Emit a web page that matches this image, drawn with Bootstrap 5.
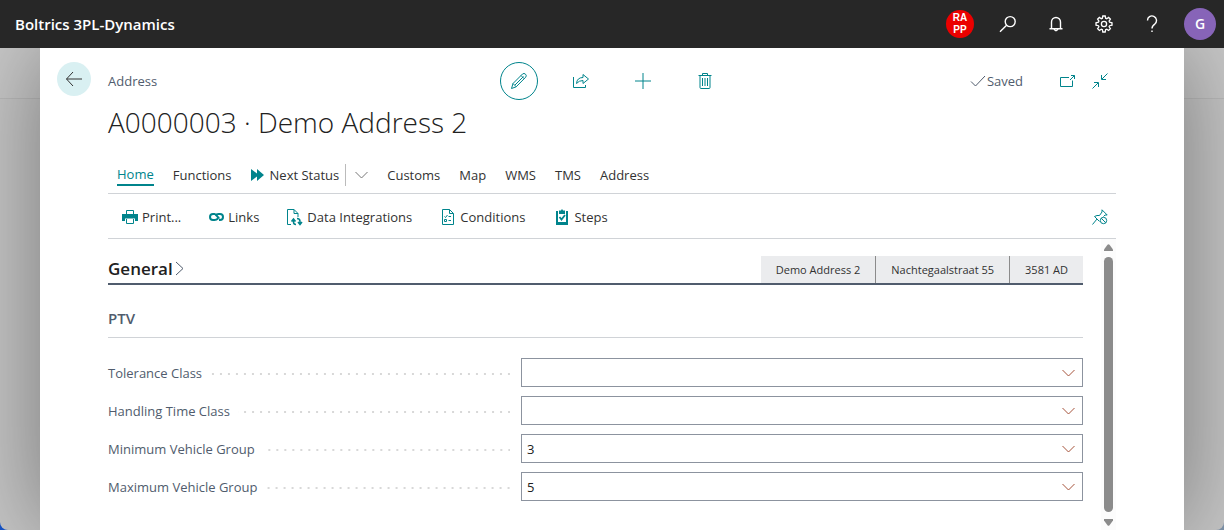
<!DOCTYPE html>
<html lang="en">
<head>
<meta charset="utf-8">
<meta name="viewport" content="width=device-width, initial-scale=1">
<title>Boltrics 3PL-Dynamics</title>
<link href="https://cdn.jsdelivr.net/npm/bootstrap@5.3.0/dist/css/bootstrap.min.css" rel="stylesheet">
<style>
:root { --teal: #00848c; --slate: #505c6d; --ink: #323232; }
body { font-family: "Open Sans", "Noto Sans", sans-serif; font-size: 13px; line-height: 20px; color: var(--ink); background: linear-gradient(90deg, #1450c0 0 50%, #7a8ea4 50%); }
button { color: inherit; }
svg { display: block; fill: none; stroke: currentColor; flex: none; }
.shell { border-radius: 0 0 8px 8px; background: linear-gradient(#c8c8c8 0 98px, #bababa 98px 99px, #c6c6c6 99px); }
.topbar { height: 48px; padding: 0 8px 4px 15px; background: #272727; z-index: 2; }
.brand { font-size: 15px; font-weight: 600; }
.topbar .btn { width: 48px; height: 48px; color: #fff; }
.round { border-radius: 50%; font-weight: 600; color: #fff; }
.company { width: 28px; height: 28px; font: 700 10px/12px "Liberation Sans", sans-serif; background: #eb0000; margin-right: 10px; }
.avatar { width: 32px; height: 32px; background: #8764b8; font-size: 14px; margin-left: 8px; }
.topbar > * { margin-top: 4px; }
.sheet { margin: 0 40px; padding: 14px 68px 0; background: #fff; box-shadow: 0 0 90px rgba(0,0,0,.4); }
.headrow { display: grid; grid-template-columns: 1fr auto 1fr; height: 38px; }
.back { width: 34px; height: 34px; left: -51px; top: 0; background: #d9f0f2; color: #323232; border-radius: 50%; }
.tool { width: 38px; height: 38px; color: var(--teal); }
.tool.edit { border: 1px solid var(--teal); border-radius: 50%; }
.quiet { color: var(--slate); }
.teal { color: var(--teal); }
h1 { font-size: 28px; font-weight: 300; line-height: 40px; margin: 2px 0 0; color: #212121; }
.tabrow { margin-top: 20px; height: 32px; padding: 0 9px 5px; gap: 19px; border-bottom: 1px solid #d0d3d7; }
.tabrow a, .actions a { color: var(--ink); text-decoration: none; }
.tabrow a.active { color: var(--teal); border-bottom: 2px solid var(--teal); }
.split { height: 22px; border-left: 1px solid #bbb; padding-left: 9px; margin-left: 6px; color: #777; }
.actions { height: 45px; padding: 2px 8px 0 14px; border-bottom: 1px solid #d0d3d7; gap: 28px; }
.rail { width: 15px; margin-left: 18px; background: #fcfcfc; color: #8b8b8b; padding: 5px 0 4px; }
.thumb { width: 9px; border-radius: 5px; background: #8b8b8b; margin: 6px 0 7px; }
.grouphead { margin-top: 17px; height: 29px; border-bottom: 2px solid var(--slate); }
h2 { font-size: 17px; line-height: 24px; height: 25px; font-weight: 600; margin: 0; color: #212121; }
h2 svg { margin-left: 2px; }
.facts { background: #ebecee; font-size: 11px; line-height: 27px; }
.facts span { padding: 0 15px; }
.facts span + span { border-left: 1px solid #8b8b8b; }
h3 { font-size: 15px; line-height: 20px; font-weight: 600; color: var(--slate); margin: 23px 0 20px; padding-bottom: 9px; border-bottom: 1px solid #d0d3d7; }
.field { display: grid; grid-template-columns: 413fr 562fr; margin-bottom: 9px; }
.leader { height: 2px; margin: 2px 11px 0 8px; background: linear-gradient(90deg, transparent 6px, #d8d8d8 6px) right / 8px 2px repeat-x; }
.combo { height: 29px; border: 1px solid #8c939f; }
.combo input { font-size: 13px; color: #212121; padding: 0 5px; outline: 0; min-width: 0; }
.combo .btn { color: #a5523a; padding: 0 7px; }
</style>
</head>
<body>
<div class="shell min-vh-100 d-flex flex-column overflow-hidden">
  <header class="topbar d-flex align-items-center text-white position-relative">
    <span class="brand me-auto">Boltrics 3PL-Dynamics</span>
    <button type="button" class="round company border-0 p-0 text-center">RA<br>PP</button>
    <button type="button" class="btn p-0 d-flex align-items-center justify-content-center" aria-label="Search"><svg width="18" height="18" stroke-width="1.4"><circle cx="11.2" cy="6.6" r="5"/><path d="M7.6 10.2 1 16.8"/></svg></button>
    <button type="button" class="btn p-0 d-flex align-items-center justify-content-center" aria-label="Notifications"><svg width="16" height="18" stroke-width="1.4"><path d="M1.5 13.8h13M3.5 13.5V7a4.5 4.5 0 0 1 9 0v6.5M6 14.2q2 3 4 0"/></svg></button>
    <button type="button" class="btn p-0 d-flex align-items-center justify-content-center" aria-label="Settings"><svg width="18" height="18" viewBox="0 0 18 18" stroke-width="1.3"><circle cx="9" cy="9" r="2.6"/><path d="M7.8 1h2.4l.4 2.2 1.1.5 1.9-1.3 1.8 1.8-1.3 1.9.5 1.1 2.4.6v2.4l-2.4.5-.5 1.1 1.3 1.9-1.8 1.8-1.9-1.3-1.1.5-.4 2.3H7.8l-.4-2.3-1.1-.5-1.9 1.3-1.8-1.8 1.3-1.9-.5-1.1L1 10.200V7.800l2.400-.6.5-1.100-1.300-1.900 1.800-1.800 1.900 1.300 1.100-.5z"/></svg></button>
    <button type="button" class="btn p-0 d-flex align-items-center justify-content-center" aria-label="Help"><svg width="12" height="18" stroke-width="1.4"><path d="M1.500 5.500a4.500 4.500 0 1 1 7.500 3.300Q6 10.800 6 13.500M6 15.500v1.600"/></svg></button>
    <button type="button" class="round avatar border-0 p-0">G</button>
  </header>

  <main class="sheet flex-grow-1 d-flex flex-column">
    <div class="headrow align-items-center position-relative">
      <button type="button" class="back btn p-0 border-0 position-absolute d-flex align-items-center justify-content-center" aria-label="Back"><svg width="18" height="16"><path d="M17 8H1.500M8 1 1.500 8 8 15"/></svg></button>
      <span class="quiet">Address</span>
      <div class="d-flex gap-4">
        <button type="button" class="tool edit btn p-0 d-flex align-items-center justify-content-center" aria-label="Edit"><svg width="18" height="18"><path d="M1.500 16.500 3 11.500 12.500 2q1.500-1.300 3 .2t.2 3L6.200 14.800zM3 11.500l3.200 3.300M11 3.500l3.300 3.300M13.500 4.500 5 13"/></svg></button>
        <button type="button" class="tool btn p-0 border-0 d-flex align-items-center justify-content-center" aria-label="Share"><svg width="18" height="16"><path d="M1.500 4v10.500h12V12M4.500 10.500Q5 4.500 11 4.500v-3l5.500 4.500-5.500 4.500v-3Q7 7.500 4.500 10.500z"/></svg></button>
        <button type="button" class="tool btn p-0 border-0 d-flex align-items-center justify-content-center" aria-label="New"><svg width="18" height="18"><path d="M9 1v16M1 9h16"/></svg></button>
        <button type="button" class="tool btn p-0 border-0 d-flex align-items-center justify-content-center" aria-label="Delete"><svg width="14" height="18"><path d="M.5 3.500h13M4.500 3.500v-2h5v2M2 3.500v12q0 1 1 1h8q1 0 1-1v-12M4.500 6v8M7 6v8M9.500 6v8"/></svg></button>
      </div>
      <div class="d-flex align-items-center justify-content-end pe-2 teal">
        <svg class="quiet" width="17" height="14"><path d="M1 7.500 5.500 12 15 2"/></svg>
        <span class="quiet me-4 pe-2">Saved</span>
        <button type="button" class="btn p-0 border-0 ms-1 me-3 teal" aria-label="Open in new window"><svg width="17" height="14"><path d="M10 3.500H1.500v9h12v-6M11 6 15.500 1.500M12 1.500h3.500V5"/></svg></button>
        <button type="button" class="btn p-0 border-0 teal" aria-label="Collapse"><svg width="16" height="16"><path d="M15.500.5 10 6M9.500 2v4.500H14M.5 15.500 6 10M2 9.500h4.500V14"/></svg></button>
      </div>
    </div>
    <h1>A0000003 · Demo Address 2</h1>

    <nav class="tabrow d-flex align-items-center" aria-label="Tabs">
      <a href="#" class="active">Home</a>
      <a href="#">Functions</a>
      <div class="d-flex align-items-center">
        <a href="#" class="d-flex align-items-center"><svg class="teal me-1" width="15" height="12" style="fill:currentColor;stroke:none"><path d="M0 0 6 4.500V0l7 6-7 6V7.500L0 12z"/></svg>Next Status</a>
        <button type="button" class="split bg-transparent border-top-0 border-end-0 border-bottom-0 pe-0 py-0" aria-label="More statuses"><svg width="13" height="8"><path d="M.5 1 6.500 7l6-6"/></svg></button>
      </div>
      <a href="#">Customs</a><a href="#">Map</a><a href="#">WMS</a><a href="#">TMS</a><a href="#">Address</a>
    </nav>

    <div class="actions d-flex align-items-center">
      <a href="#" class="d-flex align-items-center gap-1"><svg class="teal" width="16" height="16"><path d="M4.500 5V1.500h7V5" /><path d="M0 5h16v7h-3V9.500H3V12H0z" fill="currentColor" stroke="none"/><path d="M4.500 10v4.500h7V10"/></svg>Print...</a>
      <a href="#" class="d-flex align-items-center gap-1"><svg class="teal" width="15" height="10" stroke-width="2"><path d="M9 6.500Q7.500 8 5.500 8H4Q1 8 1 5t3-3h1.500Q7 2 8 4t2.500 2M6 3.500Q7.500 2 9.500 2H11q3 0 3 3t-3 3h-1"/></svg>Links</a>
      <a href="#" class="d-flex align-items-center gap-1"><svg class="teal" width="16" height="17"><path d="M4 15.500H.5V.5h6.500l4 4V8M7 .5v4h4"/><path d="M6.500 10v3q0 2.500 2.500 2.500M4.500 12.500l2-2.500 2 2.500M10 9.500q3 0 3 3v3M11 13l2 2.500 2-2.500" stroke-width="1.500"/></svg>Data Integrations</a>
      <a href="#" class="d-flex align-items-center gap-1"><svg class="teal" width="16" height="17"><path d="M2.500.5h7l4 4v11h-11zM9.500.5v4h4M4.500 7.500l1 1 2-2.500M8.500 7.500H11M8.500 11.500H11M4.500 10.500h2v2h-2z"/></svg>Conditions</a>
      <a href="#" class="d-flex align-items-center gap-1"><svg class="teal" width="17" height="17"><path d="M4 2v12.500h10V2" stroke-width="2"/><path d="M3 13h12v3H3zM6 1.500h2q1-2.500 2 0h2V5H6z" fill="currentColor" stroke="none"/><path d="M6.500 8 8.500 10.500l3.500-4.500" stroke-width="1.800"/></svg>Steps</a>
      <button type="button" class="btn p-0 border-0 teal ms-auto" aria-label="Unpin"><svg width="16" height="16"><path d="M.5 15.500 5 10M2.500 7.500l5 5M2.500 7.500q2.500-1.500 5-1L10 3V.8L15.200 6H13l-1.500 1.500"/><circle cx="11.500" cy="11.500" r="3.200"/><path d="m9.300 9.300 4.400 4.400"/></svg></button>
    </div>

    <div class="d-flex flex-grow-1">
      <div class="flex-grow-1">
        <div class="grouphead d-flex justify-content-between">
          <h2 class="d-flex align-items-center">General<svg class="quiet" width="9" height="15"><path d="M1 1l7 6.500L1 14"/></svg></h2>
          <div class="facts d-flex"><span>Demo Address 2</span><span>Nachtegaalstraat 55</span><span>3581 AD</span></div>
        </div>
        <h3>PTV</h3>
        <div class="field"><label class="d-flex align-items-center quiet" for="tol">Tolerance Class<span class="leader flex-grow-1"></span></label>
          <div class="combo d-flex"><input id="tol" type="text" class="flex-grow-1 border-0 bg-transparent"><button type="button" class="btn border-0" aria-label="Choose tolerance class"><svg width="13" height="8"><path d="M.5 1 6.500 7l6-6"/></svg></button></div></div>
        <div class="field"><label class="d-flex align-items-center quiet" for="hand">Handling Time Class<span class="leader flex-grow-1"></span></label>
          <div class="combo d-flex"><input id="hand" type="text" class="flex-grow-1 border-0 bg-transparent"><button type="button" class="btn border-0" aria-label="Choose handling time class"><svg width="13" height="8"><path d="M.5 1 6.500 7l6-6"/></svg></button></div></div>
        <div class="field"><label class="d-flex align-items-center quiet" for="minv">Minimum Vehicle Group<span class="leader flex-grow-1"></span></label>
          <div class="combo d-flex"><input id="minv" type="text" value="3" class="flex-grow-1 border-0 bg-transparent"><button type="button" class="btn border-0" aria-label="Choose minimum vehicle group"><svg width="13" height="8"><path d="M.5 1 6.500 7l6-6"/></svg></button></div></div>
        <div class="field"><label class="d-flex align-items-center quiet" for="maxv">Maximum Vehicle Group<span class="leader flex-grow-1"></span></label>
          <div class="combo d-flex"><input id="maxv" type="text" value="5" class="flex-grow-1 border-0 bg-transparent"><button type="button" class="btn border-0" aria-label="Choose maximum vehicle group"><svg width="13" height="8"><path d="M.5 1 6.500 7l6-6"/></svg></button></div></div>
      </div>
      <div class="rail d-flex flex-column align-items-center" aria-hidden="true">
        <svg width="9" height="7" style="fill:currentColor;stroke:none"><path d="M0 7V5.500L3.500.7q1-1 2 0L9 5.500V7z"/></svg>
        <div class="thumb flex-grow-1"></div>
        <svg width="9" height="7" style="fill:currentColor;stroke:none"><path d="M0 0v1.500l3.500 4.800q1 1 2 0L9 1.500V0z"/></svg>
      </div>
    </div>
  </main>
</div>
<script src="https://cdn.jsdelivr.net/npm/bootstrap@5.3.0/dist/js/bootstrap.bundle.min.js"></script>
</body>
</html>
